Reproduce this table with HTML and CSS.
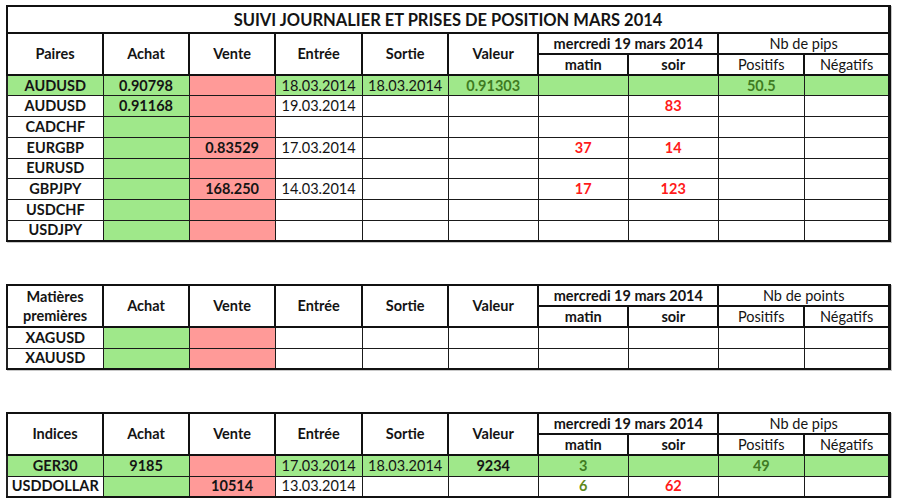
FILE: index.html
```html
<!DOCTYPE html>
<html lang="fr">
<head>
<meta charset="utf-8">
<title>Suivi journalier</title>
<link rel="stylesheet" href="styles.css">
</head>
<body>
<main class="page">
  <table class="sheet t1">
    <colgroup>
      <col class="c1"><col class="c2"><col class="c3"><col class="c4"><col class="c5">
      <col class="c6"><col class="c7"><col class="c8"><col class="c9"><col class="c10">
    </colgroup>
    <tr class="title-row"><th colspan="10" class="title">SUIVI JOURNALIER ET PRISES DE POSITION MARS 2014</th></tr>
    <tr class="head-row">
      <th rowspan="2" class="hb">Paires</th><th rowspan="2" class="hb">Achat</th><th rowspan="2" class="hb">Vente</th>
      <th rowspan="2" class="hb">Entrée</th><th rowspan="2" class="hb">Sortie</th><th rowspan="2" class="hb">Valeur</th>
      <th colspan="2" class="hb sub-top">mercredi 19 mars 2014</th><th colspan="2" class="hb sub-top reg">Nb de pips</th>
    </tr>
    <tr class="head-row">
      <th class="hb">matin</th><th class="hb">soir</th><th class="hb reg">Positifs</th><th class="hb reg">Négatifs</th>
    </tr>
    <tr class="row win">
      <td class="name">AUDUSD</td><td class="b">0.90798</td><td class="sell"></td><td>18.03.2014</td><td>18.03.2014</td>
      <td class="b dg">0.91303</td><td></td><td></td><td class="b dg">50.5</td><td></td>
    </tr>
    <tr class="row">
      <td class="name">AUDUSD</td><td class="buy b">0.91168</td><td class="sell"></td><td>19.03.2014</td><td></td>
      <td></td><td></td><td class="b red">83</td><td></td><td></td>
    </tr>
    <tr class="row">
      <td class="name">CADCHF</td><td class="buy"></td><td class="sell"></td><td></td><td></td>
      <td></td><td></td><td></td><td></td><td></td>
    </tr>
    <tr class="row">
      <td class="name">EURGBP</td><td class="buy"></td><td class="sell b">0.83529</td><td>17.03.2014</td><td></td>
      <td></td><td class="b red">37</td><td class="b red">14</td><td></td><td></td>
    </tr>
    <tr class="row">
      <td class="name">EURUSD</td><td class="buy"></td><td class="sell"></td><td></td><td></td>
      <td></td><td></td><td></td><td></td><td></td>
    </tr>
    <tr class="row">
      <td class="name">GBPJPY</td><td class="buy"></td><td class="sell b">168.250</td><td>14.03.2014</td><td></td>
      <td></td><td class="b red">17</td><td class="b red">123</td><td></td><td></td>
    </tr>
    <tr class="row">
      <td class="name">USDCHF</td><td class="buy"></td><td class="sell"></td><td></td><td></td>
      <td></td><td></td><td></td><td></td><td></td>
    </tr>
    <tr class="row">
      <td class="name">USDJPY</td><td class="buy"></td><td class="sell"></td><td></td><td></td>
      <td></td><td></td><td></td><td></td><td></td>
    </tr>
  </table>

  <table class="sheet t2">
    <colgroup>
      <col class="c1"><col class="c2"><col class="c3"><col class="c4"><col class="c5">
      <col class="c6"><col class="c7"><col class="c8"><col class="c9"><col class="c10">
    </colgroup>
    <tr class="head-row">
      <th rowspan="2" class="hb two-line">Matières<br>premières</th><th rowspan="2" class="hb">Achat</th><th rowspan="2" class="hb">Vente</th>
      <th rowspan="2" class="hb">Entrée</th><th rowspan="2" class="hb">Sortie</th><th rowspan="2" class="hb">Valeur</th>
      <th colspan="2" class="hb sub-top">mercredi 19 mars 2014</th><th colspan="2" class="hb sub-top reg">Nb de points</th>
    </tr>
    <tr class="head-row">
      <th class="hb">matin</th><th class="hb">soir</th><th class="hb reg">Positifs</th><th class="hb reg">Négatifs</th>
    </tr>
    <tr class="row">
      <td class="name">XAGUSD</td><td class="buy"></td><td class="sell"></td><td></td><td></td>
      <td></td><td></td><td></td><td></td><td></td>
    </tr>
    <tr class="row">
      <td class="name">XAUUSD</td><td class="buy"></td><td class="sell"></td><td></td><td></td>
      <td></td><td></td><td></td><td></td><td></td>
    </tr>
  </table>

  <table class="sheet t3">
    <colgroup>
      <col class="c1"><col class="c2"><col class="c3"><col class="c4"><col class="c5">
      <col class="c6"><col class="c7"><col class="c8"><col class="c9"><col class="c10">
    </colgroup>
    <tr class="head-row">
      <th rowspan="2" class="hb">Indices</th><th rowspan="2" class="hb">Achat</th><th rowspan="2" class="hb">Vente</th>
      <th rowspan="2" class="hb">Entrée</th><th rowspan="2" class="hb">Sortie</th><th rowspan="2" class="hb">Valeur</th>
      <th colspan="2" class="hb sub-top">mercredi 19 mars 2014</th><th colspan="2" class="hb sub-top reg">Nb de pips</th>
    </tr>
    <tr class="head-row">
      <th class="hb">matin</th><th class="hb">soir</th><th class="hb reg">Positifs</th><th class="hb reg">Négatifs</th>
    </tr>
    <tr class="row win">
      <td class="name">GER30</td><td class="b">9185</td><td class="sell"></td><td>17.03.2014</td><td>18.03.2014</td>
      <td class="b">9234</td><td class="b dg">3</td><td></td><td class="b dg">49</td><td></td>
    </tr>
    <tr class="row">
      <td class="name">USDDOLLAR</td><td class="buy"></td><td class="sell b">10514</td><td>13.03.2014</td><td></td>
      <td></td><td class="b og">6</td><td class="b red">62</td><td></td><td></td>
    </tr>
  </table>
</main>
</body>
</html>
```

FILE: styles.css
```css
html, body {
  margin: 0;
  padding: 0;
  background: #ffffff;
}

.page {
  padding: 5px 0 0 6px;
  display: flex;
  flex-direction: column;
  gap: 42px;
  font-family: Lato, "Open Sans", "Liberation Sans", sans-serif;
  color: #141414;
}

.sheet {
  border-collapse: collapse;
  table-layout: fixed;
  width: 885px;
  border-top: 2px solid #111;
  border-left: 2px solid #222;
  border-right: 3px solid #111;
  border-bottom: 2px solid #111;
  box-shadow: 1px 1px 0 #c8c8c8;
  font-size: 14.5px;
}

.c1 { width: 96px; }
.c2 { width: 86px; }
.c3 { width: 86px; }
.c4 { width: 87px; }
.c5 { width: 86px; }
.c6 { width: 90px; }
.c7 { width: 90px; }
.c8 { width: 90px; }
.c9 { width: 86px; }
.c10 { width: 85px; }

th, td {
  padding: 0;
  text-align: center;
  vertical-align: middle;
  overflow: hidden;
  white-space: nowrap;
  line-height: 16px;
}

td {
  border: 1px solid #1a1a1a;
  font-weight: 400;
}

th {
  border: 2px solid #111;
  font-weight: 700;
}

th.reg {
  font-weight: 400;
}

.title-row {
  height: 27px;
}

.title {
  font-size: 16.5px;
  font-weight: 700;
  letter-spacing: 0;
}

.head-row {
  height: 21px;
}

.sub-top {
  border-bottom-width: 1px;
}

.two-line {
  line-height: 19px;
}

.row {
  height: 21px;
}

.t1 .row {
  height: 20.75px;
}

.name {
  font-weight: 700;
}

.b {
  font-weight: 700;
}

.win td {
  background: #9fe88a;
}

.win td.sell,
td.sell {
  background: #ff9a98;
}

td.buy {
  background: #9fe88a;
}

.dg {
  color: #3f7b22;
}

.og {
  color: #5f8a1c;
}

.red {
  color: #ff1a1a;
}
```
